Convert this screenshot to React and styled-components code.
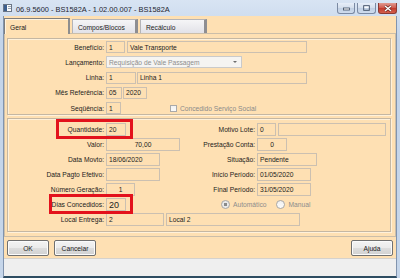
import React from "react";
import styled, { createGlobalStyle } from "styled-components";

const GlobalStyle = createGlobalStyle`
  html, body { margin: 0; padding: 0; }
  body {
    width: 400px;
    height: 278px;
    overflow: hidden;
    font-family: "Liberation Sans", Arial, sans-serif;
  }
  * { box-sizing: border-box; }
`;

const PEACH = "#fee0b3";

const Window = styled.div`
  width: 400px;
  height: 278px;
  display: flex;
  flex-direction: column;
  padding: 0 3px;
  background: linear-gradient(#d8e4f3, #c3d4ea 40px, #c6d6ea);
  font-size: 6.7px;
  color: #1c1c1c;
`;

const TitleBar = styled.div`
  height: 16px;
  flex: none;
  display: flex;
  align-items: flex-start;
`;

const AppIcon = styled.svg`
  margin-top: 4px;
  flex: none;
`;

const Title = styled.div`
  margin: 4.5px 0 0 4px;
  font-size: 7.4px;
  color: #1e2530;
  white-space: nowrap;
`;

const Controls = styled.div`
  margin: 3px 0 0 auto;
  display: flex;
  gap: 2px;
`;

const CtlButton = styled.div`
  width: ${p => p.$w}px;
  height: 11px;
  border: 1px solid ${p => (p.$close ? "#8c3a33" : "#7b8aa3")};
  border-top: none;
  border-radius: 0 0 3px 3px;
  background: ${p =>
    p.$close
      ? "linear-gradient(#e09a90, #d0574a 50%, #c2392c 51%, #d45e4c)"
      : "linear-gradient(#e7eef8, #d3deec 50%, #c0cfe3 51%, #cfdcee)"};
  display: flex;
  align-items: center;
  justify-content: center;
`;

const Client = styled.div`
  flex: 1;
  display: flex;
  flex-direction: column;
  background: ${PEACH};
  border-left: 1px solid #8194ae;
  border-right: 1px solid #8194ae;
  border-bottom: 2px solid #2e4d62;
`;

const TabStrip = styled.div`
  height: 17px;
  flex: none;
  display: flex;
  align-items: flex-end;
  gap: 2px;
`;

const Tab = styled.div`
  width: ${p => p.$w}px;
  position: relative;
  z-index: 1;
  white-space: nowrap;
  padding-left: 5px;
  display: flex;
  align-items: center;
  ${p =>
    p.$active
      ? `
    height: 16px;
    margin-bottom: -1px;
    padding-top: 1px;
    background: ${PEACH};
    border: 1px solid #7e7e7e;
    border-right: 2px solid #8e8e8e;
    border-bottom: none;
    box-shadow: inset 1px 1px 0 #fff4e2;
  `
      : `
    height: 14px;
    padding-top: 2px;
    background: linear-gradient(#f5f5f7, #e2e2e8);
    border: 1px solid #b4b4b8;
    border-right: 3px solid #8e8e92;
    border-bottom: none;
  `}
`;

const TabPage = styled.div`
  height: 204px;
  flex: none;
  display: flex;
  flex-direction: column;
  gap: 3px;
  border: 1px solid #cbbea9;
  padding: 4px 4px 4px 2px;
`;

const Group = styled.div`
  border: 1px solid #c4b7a3;
  box-shadow: inset 1px 1px 0 #fff1da, 1px 1px 0 #fff1da;
  display: grid;
  column-gap: 2px;
  ${p =>
    p.$lower
      ? `
    flex: 1;
    padding-top: 4px;
    grid-template-columns: 96px 79px 68px 1fr;
    grid-auto-rows: 13px;
    row-gap: 2px;
  `
      : `
    height: 77px;
    flex: none;
    padding-top: 2px;
    grid-template-columns: 96px 1fr;
    grid-auto-rows: 12px;
    row-gap: 3.25px;
  `}
`;

const Label = styled.div`
  position: relative;
  display: flex;
  align-items: center;
  justify-content: flex-end;
  white-space: nowrap;
  ${p =>
    p.$mark != null &&
    `
    &::after {
      content: "";
      position: absolute;
      left: ${p.$mark}px;
      right: -29px;
      top: -4px;
      bottom: -3px;
      border: 3px solid #e3121c;
      pointer-events: none;
    }
  `}
`;

const Cell = styled.div`
  display: flex;
  align-items: stretch;
  gap: ${p => p.$gap ?? 2}px;
  grid-column: ${p => p.$span || "auto"};
  padding-left: ${p => p.$pad || 0}px;
`;

const Field = styled.div`
  width: ${p => p.$w}px;
  flex: none;
  border: 1px solid #cbc0b1;
  padding: 0 2px;
  display: flex;
  align-items: center;
  justify-content: ${p => (p.$center ? "center" : "flex-start")};
  font-size: ${p => (p.$big ? "9px" : "inherit")};
  white-space: nowrap;
  overflow: hidden;
`;

const Select = styled.div`
  width: 136px;
  flex: none;
  border: 1px solid #cacaca;
  background: #f5f4f2;
  color: #8e8e8e;
  padding: 0 4px 0 2px;
  display: flex;
  align-items: center;
  justify-content: space-between;
  white-space: nowrap;
`;

const Arrow = styled.span`
  width: 0;
  height: 0;
  border-left: 2px solid transparent;
  border-right: 2px solid transparent;
  border-top: 2px solid #6d6d6d;
`;

const Check = styled.div`
  margin-left: 47px;
  display: flex;
  align-items: center;
  gap: 3px;
  color: #8a8a8a;
  white-space: nowrap;
`;

const Box = styled.span`
  width: 7px;
  height: 7px;
  border: 1px solid #a9a9a9;
  background: linear-gradient(#f2f2f2, #fafafa);
`;

const Radios = styled.div`
  display: flex;
  align-items: center;
  gap: 10px;
  color: #8c8c8c;
`;

const Radio = styled.div`
  display: flex;
  align-items: center;
  gap: 3px;
  white-space: nowrap;
  &::before {
    content: "";
    width: 7px;
    height: 7px;
    border-radius: 50%;
    border: 1px solid #a8a8a8;
    background: ${p =>
      p.$on
        ? "radial-gradient(circle, #8a8a8a 0 1.6px, #e9e9e9 2px)"
        : "linear-gradient(#f0f0f0, #fbfbfb)"};
  }
`;

const ButtonBar = styled.div`
  height: 21px;
  flex: none;
  display: flex;
  align-items: center;
  gap: 5px;
  padding: 1px 3px 0;
`;

const Button = styled.div`
  width: 42px;
  height: 16px;
  margin-left: ${p => (p.$right ? "auto" : 0)};
  border: 1px solid #707070;
  border-radius: 2px;
  background: linear-gradient(#f3f3f3, #ebebeb 50%, #dddddd 51%, #d1d1d1);
  box-shadow: inset 0 0 0 1px #fbfbfb;
  display: flex;
  align-items: center;
  justify-content: center;
`;

const StatusStrip = styled.div`
  flex: 1;
  background: #efefef;
  border-top: 1px solid #d6d2cc;
`;

const upper = [
  { label: "Benefício:", fields: [{ w: 19, v: "1" }, { w: 180, v: "Vale Transporte" }] },
  { label: "Lançamento:", select: "Requisição de Vale Passagem" },
  { label: "Linha:", gap: 1, fields: [{ w: 30, v: "1" }, { w: 170, v: "Linha 1" }] },
  { label: "Mês Referência:", gap: 1, fields: [{ w: 16, v: "05" }, { w: 24, v: "2020" }] },
  { label: "Seqüência:", fields: [{ w: 15, v: "1" }], check: "Concedido Serviço Social" },
];

const left = [
  { label: "Quantidade:", mark: 48, fields: [{ w: 20, v: "20" }] },
  { label: "Valor:", fields: [{ w: 74, v: "70,00", center: true }] },
  { label: "Data Movto:", fields: [{ w: 54, v: "18/06/2020" }] },
  { label: "Data Pagto Efetivo:", fields: [{ w: 54, v: "" }] },
  { label: "Número Geração:", fields: [{ w: 29, v: "1", center: true }] },
  { label: "Dias Concedidos:", mark: 41, fields: [{ w: 20, v: "20", big: true }] },
];

const right = [
  { label: "Motivo Lote:", fields: [{ w: 19, v: "0" }, { w: 108, v: "" }] },
  { label: "Prestação Conta:", fields: [{ w: 30, v: "0", center: true }] },
  { label: "Situação:", fields: [{ w: 60, v: "Pendente" }] },
  { label: "Início Período:", fields: [{ w: 54, v: "01/05/2020" }] },
  { label: "Final Período:", fields: [{ w: 54, v: "31/05/2020" }] },
];

const Fields = ({ items }) =>
  items.map((f, i) => (
    <Field key={i} $w={f.w} $center={f.center} $big={f.big}>
      {f.v}
    </Field>
  ));

export default function App() {
  return (
    <>
      <GlobalStyle />
      <Window>
        <TitleBar>
          <AppIcon width="9" height="8" viewBox="0 0 9 8">
            <rect x="0.5" y="0.5" width="8" height="7" fill="#fbfbfb" stroke="#6b7686" />
            <rect x="1" y="1" width="3" height="6" fill="#3d5f8e" />
            <rect x="5" y="2" width="3" height="1" fill="#9aa6b6" />
            <rect x="5" y="4" width="3" height="1" fill="#9aa6b6" />
          </AppIcon>
          <Title>06.9.5600 - BS1582A - 1.02.00.007 - BS1582A</Title>
          <Controls>
            <CtlButton $w={18}>
              <svg width="7" height="6" viewBox="0 0 7 6">
                <rect x="0.5" y="3" width="6" height="2" fill="#fff" stroke="#3b4a60" strokeWidth="0.8" />
              </svg>
            </CtlButton>
            <CtlButton $w={19}>
              <svg width="7" height="6" viewBox="0 0 7 6">
                <rect x="0.7" y="0.7" width="5.6" height="4.6" fill="none" stroke="#3b4a60" strokeWidth="0.9" />
                <rect x="1.5" y="1.6" width="4" height="1.3" fill="#fff" />
              </svg>
            </CtlButton>
            <CtlButton $w={19} $close>
              <svg width="8" height="7" viewBox="0 0 8 7">
                <path d="M1 1 L7 6 M7 1 L1 6" stroke="#5a1f1a" strokeWidth="2.6" />
                <path d="M1 1 L7 6 M7 1 L1 6" stroke="#fff" strokeWidth="1.5" />
              </svg>
            </CtlButton>
          </Controls>
        </TitleBar>

        <Client>
          <TabStrip>
            <Tab $w={66} $active>Geral</Tab>
            <Tab $w={66}>Compos/Blocos</Tab>
            <Tab $w={67}>Recálculo</Tab>
          </TabStrip>

          <TabPage>
            <Group>
              {upper.map(r => (
                <React.Fragment key={r.label}>
                  <Label>{r.label}</Label>
                  <Cell $gap={r.gap}>
                    {r.select ? (
                      <Select>
                        {r.select}
                        <Arrow />
                      </Select>
                    ) : (
                      <Fields items={r.fields} />
                    )}
                    {r.check && (
                      <Check>
                        <Box />
                        {r.check}
                      </Check>
                    )}
                  </Cell>
                </React.Fragment>
              ))}
            </Group>

            <Group $lower>
              {left.map((r, i) => (
                <React.Fragment key={r.label}>
                  <Label $mark={r.mark}>{r.label}</Label>
                  <Cell>
                    <Fields items={r.fields} />
                  </Cell>
                  {right[i] ? (
                    <>
                      <Label>{right[i].label}</Label>
                      <Cell>
                        <Fields items={right[i].fields} />
                      </Cell>
                    </>
                  ) : (
                    <Cell $span="3 / 5" $pad={34}>
                      <Radios>
                        <Radio $on>Automático</Radio>
                        <Radio>Manual</Radio>
                      </Radios>
                    </Cell>
                  )}
                </React.Fragment>
              ))}
              <Label>Local Entrega:</Label>
              <Cell $span="2 / 5">
                <Fields items={[{ w: 58, v: "2" }, { w: 134, v: "Local 2" }]} />
              </Cell>
            </Group>
          </TabPage>

          <ButtonBar>
            <Button>OK</Button>
            <Button>Cancelar</Button>
            <Button $right>Ajuda</Button>
          </ButtonBar>
          <StatusStrip />
        </Client>
      </Window>
    </>
  );
}
